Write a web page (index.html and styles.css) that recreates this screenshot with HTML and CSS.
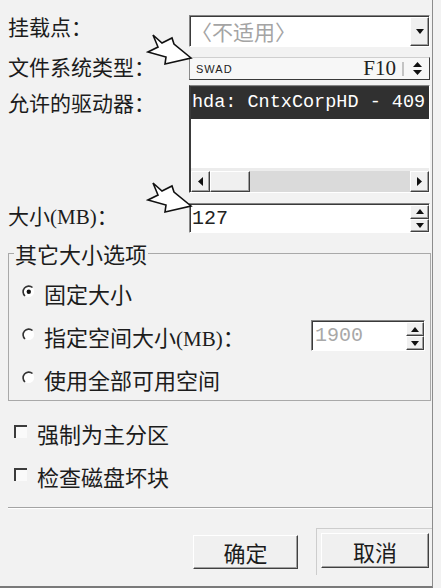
FILE: index.html
```html
<!DOCTYPE html>
<html lang="zh-CN">
<head>
<meta charset="utf-8">
<title>分区设置</title>
<link rel="stylesheet" href="styles.css">
</head>
<body>
<div class="dialog">
  <div class="row row-mount">
    <span class="label">挂载点：</span>
    <div class="combo sunken">
      <span class="combo-text">〈不适用〉</span>
      <span class="drop raised"><svg width="8" height="5" viewBox="0 0 8 5"><polygon points="0,0 8,0 4,5" fill="#111"/></svg></span>
    </div>
  </div>

  <div class="row row-fs">
    <span class="label">文件系统类型：</span>
    <div class="fs">
      <span class="fs-name">SWAD</span>
      <span class="fs-code">F10</span>
      <span class="fs-bar"></span>
      <svg class="fs-updown" width="9" height="15" viewBox="0 0 9 15"><polygon points="0,6 4.5,1 9,6" fill="#111"/><polygon points="0,9 9,9 4.5,14" fill="#111"/></svg>
    </div>
  </div>

  <div class="row row-drives">
    <span class="label">允许的驱动器：</span>
    <div class="list sunken">
      <div class="list-item">hda: CntxCorpHD - 409</div>
      <div class="list-empty"></div>
      <div class="hscroll">
        <span class="sb-btn raised"><svg width="5" height="9" viewBox="0 0 5 9"><polygon points="5,0 5,9 0,4.5" fill="#111"/></svg></span>
        <span class="sb-thumb raised"></span>
        <span class="sb-track"></span>
        <span class="sb-btn raised"><svg width="5" height="9" viewBox="0 0 5 9"><polygon points="0,0 0,9 5,4.5" fill="#111"/></svg></span>
      </div>
    </div>
  </div>

  <div class="row row-size">
    <span class="label">大小<span class="lat">(MB)</span>：</span>
    <div class="spin sunken">
      <span class="spin-text">127</span>
      <div class="spin-btns">
        <span class="raised half"><svg width="8" height="5" viewBox="0 0 8 5"><polygon points="0,5 8,5 4,0" fill="#111"/></svg></span>
        <span class="raised half"><svg width="8" height="5" viewBox="0 0 8 5"><polygon points="0,0 8,0 4,5" fill="#111"/></svg></span>
      </div>
    </div>
  </div>

  <fieldset class="group">
    <legend>其它大小选项</legend>
    <div class="opt">
      <svg class="radio" width="13" height="13" viewBox="0 0 13 13"><circle cx="6.5" cy="6.5" r="5.6" fill="#fff"/><path d="M3 11 A5.6 5.6 0 0 1 10.5 2.5" stroke="#333" stroke-width="1.6" fill="none"/><circle cx="6.8" cy="6.8" r="2.2" fill="#111"/></svg>
      <span>固定大小</span>
    </div>
    <div class="opt">
      <svg class="radio" width="13" height="13" viewBox="0 0 13 13"><circle cx="6.5" cy="6.5" r="5.6" fill="#fff"/><path d="M3 11 A5.6 5.6 0 0 1 10.5 2.5" stroke="#333" stroke-width="1.6" fill="none"/></svg>
      <span>指定空间大小<span class="lat">(MB)</span>：</span>
      <div class="spin spin-small sunken">
        <span class="spin-text disabled">1900</span>
        <div class="spin-btns">
          <span class="raised half"><svg width="8" height="5" viewBox="0 0 8 5"><polygon points="0,5 8,5 4,0" fill="#111"/></svg></span>
          <span class="raised half"><svg width="8" height="5" viewBox="0 0 8 5"><polygon points="0,0 8,0 4,5" fill="#111"/></svg></span>
        </div>
      </div>
    </div>
    <div class="opt">
      <svg class="radio" width="13" height="13" viewBox="0 0 13 13"><circle cx="6.5" cy="6.5" r="5.6" fill="#fff"/><path d="M3 11 A5.6 5.6 0 0 1 10.5 2.5" stroke="#333" stroke-width="1.6" fill="none"/></svg>
      <span>使用全部可用空间</span>
    </div>
  </fieldset>

  <div class="checks">
    <div class="chk-row"><span class="check"></span><span>强制为主分区</span></div>
    <div class="chk-row"><span class="check"></span><span>检查磁盘坏块</span></div>
  </div>

  <div class="sep"></div>

  <div class="buttons">
    <button class="btn raised ok">确定</button>
    <div class="default-frame"><button class="btn raised cancel">取消</button></div>
  </div>

  <svg class="arrow a1" width="48" height="34" viewBox="0 0 48 34"><polygon points="7,2 16,10 26,5 28,11 45,25 19,31 20,24 2,19 12,14" fill="#fff" stroke="#111" stroke-width="1.6" stroke-linejoin="miter"/></svg>
  <svg class="arrow a2" width="48" height="34" viewBox="0 0 48 34"><polygon points="7,2 16,10 26,5 28,11 45,25 19,31 20,24 2,19 12,14" fill="#fff" stroke="#111" stroke-width="1.6" stroke-linejoin="miter"/></svg>
</div>
</body>
</html>
```

FILE: styles.css
```css
html, body {
  margin: 0;
  padding: 0;
  background: #f2f2f2;
}

body {
  font-family: "Noto Sans CJK SC", "Liberation Sans", sans-serif;
  color: #1c1c1c;
}

.dialog {
  position: relative;
  width: 433px;
  height: 588px;
  box-sizing: border-box;
  padding: 15px 0 0 8px;
  border-right: 1px solid #8c8c8c;
  border-bottom: 2px solid #7a7a7a;
  background: #f2f2f2;
}

.row {
  display: flex;
  align-items: flex-start;
}

.label {
  flex: none;
  width: 181px;
  font-size: 21px;
  line-height: 24px;
  white-space: nowrap;
}

.lat {
  font-family: "Liberation Serif", serif;
  font-size: 21px;
}

.sunken {
  box-sizing: border-box;
  border: 1px solid;
  border-color: #858585 #ffffff #ffffff #858585;
  box-shadow: inset 1px 1px 0 #3a3a3a;
  padding: 1px 0 0 1px;
  background: #fff;
}

.raised {
  box-sizing: border-box;
  border: 1px solid;
  border-color: #ffffff #404040 #404040 #ffffff;
  box-shadow: inset -1px -1px 0 #a0a0a0;
  background: #f0f0f0;
}

/* row 1: combo */
.row-mount .label { margin-top: -1px; }

.combo {
  width: 241px;
  height: 32px;
  display: flex;
}

.combo-text {
  flex: 1;
  font-size: 21px;
  line-height: 29px;
  color: #a4a4a4;
  white-space: nowrap;
}

.drop {
  flex: none;
  width: 19px;
  display: flex;
  align-items: center;
  justify-content: center;
}

/* row 2: file system */
.row-fs { margin-top: 10px; }
.row-fs .label { line-height: 23px; margin-top: -2px; }

.fs {
  width: 241px;
  height: 23px;
  box-sizing: border-box;
  border: 1px solid;
  border-color: #cfcfcf #3a3a3a #3a3a3a #8a8a8a;
  background: #f7f7f7;
  display: flex;
  align-items: center;
}

.fs-name {
  flex: 1;
  padding-left: 6px;
  font-family: "Liberation Sans", sans-serif;
  font-size: 11px;
  letter-spacing: 1px;
  color: #222;
}

.fs-code {
  font-family: "Liberation Serif", serif;
  font-size: 21px;
  line-height: 21px;
  color: #222;
}

.fs-bar {
  width: 2px;
  height: 14px;
  margin-left: 6px;
  background: #c4c4c4;
}

.fs-updown {
  margin: 0 7px 0 9px;
}

/* row 3: list */
.row-drives { margin-top: 5px; }
.row-drives .label { margin-top: 5px; }

.list {
  width: 241px;
  height: 108px;
  display: flex;
  flex-direction: column;
  border-left-color: #3a3a3a;
}

.list-item {
  height: 32px;
  flex: none;
  background: #303030;
  color: #fff;
  font-family: "Liberation Mono", monospace;
  font-size: 18.5px;
  line-height: 32px;
  padding-left: 1px;
  white-space: nowrap;
  overflow: hidden;
}

.list-empty {
  flex: 1;
  background: #fff;
  border-bottom: 3px solid #ececec;
}

.hscroll {
  flex: none;
  height: 21px;
  display: flex;
}

.sb-btn {
  flex: none;
  width: 19px;
  display: flex;
  align-items: center;
  justify-content: center;
}

.sb-thumb {
  flex: none;
  width: 40px;
}

.sb-track {
  flex: 1;
  background: #dadada;
}

/* row 4: size */
.row-size { margin-top: 10px; }

.spin {
  width: 241px;
  height: 30px;
  display: flex;
}

.spin-text {
  flex: 1;
  font-family: "Liberation Mono", monospace;
  font-size: 20px;
  line-height: 28px;
  padding-left: 1px;
  color: #222;
}

.spin-text.disabled {
  color: #a8a8a8;
  padding-left: 2px;
}

.spin-btns {
  flex: none;
  width: 19px;
  display: flex;
  flex-direction: column;
}

.half {
  flex: 1;
  display: flex;
  align-items: center;
  justify-content: center;
}

/* group */
.group {
  width: 423px;
  box-sizing: border-box;
  margin: 9px 0 0 0;
  padding: 7px 0 0 13px;
  border: 1px solid #a9a9a9;
  min-width: 0;
}

.group legend {
  font-size: 22px;
  line-height: 22px;
  padding: 0 1px;
  margin-left: -8px;
}

.opt {
  display: flex;
  align-items: center;
  height: 43px;
  font-size: 22px;
}

.radio {
  flex: none;
  margin: -3px 9px 0 0;
}

.spin-small {
  width: 114px;
  height: 31px;
  margin-left: auto;
  margin-right: 5px;
}

.spin-small .spin-btns { width: 18px; }

/* checks */
.checks {
  margin-top: 10px;
}

.chk-row {
  display: flex;
  align-items: center;
  height: 43px;
  padding-left: 6px;
  font-size: 22px;
}

.check {
  flex: none;
  width: 13px;
  height: 13px;
  box-sizing: border-box;
  border-top: 2px solid #3c3c3c;
  border-left: 2px solid #3c3c3c;
  background: #fafafa;
  margin: -2px 10px 0 0;
}

.sep {
  margin-top: 10px;
  border-top: 1px solid #a4a4a4;
  border-bottom: 1px solid #ffffff;
}

.buttons {
  margin-top: 19px;
  display: flex;
  align-items: center;
  justify-content: flex-end;
}

.btn {
  font-family: "Noto Sans CJK SC", sans-serif;
  font-size: 22px;
  line-height: 30px;
  color: #1c1c1c;
  padding: 0;
  margin: 0;
  cursor: default;
}

.ok {
  width: 105px;
  height: 34px;
  margin-right: 18px;
}

.default-frame {
  width: 116px;
  height: 47px;
  box-sizing: border-box;
  border-top: 1px solid #cdcdcd;
  border-left: 1px solid #cdcdcd;
  padding: 4px 3px 0 4px;
}

.cancel {
  width: 108px;
  height: 35px;
}

.arrow {
  position: absolute;
  left: 146px;
}

.a1 { top: 33px; }
.a2 { top: 181px; }
```
